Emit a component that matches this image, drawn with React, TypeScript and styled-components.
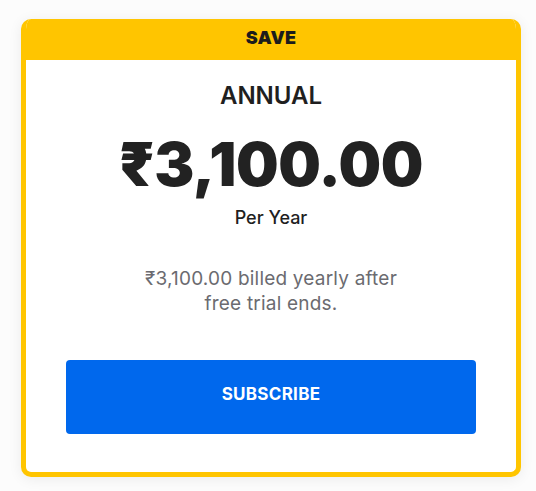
import React from "react";
import styled, { createGlobalStyle } from "styled-components";

const Global = createGlobalStyle`
  html, body { margin: 0; padding: 0; background: #ffffff; }
  body { font-family: Inter, "Noto Sans", "DejaVu Sans", sans-serif; color: #1f1f1f; }
`;

const Page = styled.div`
  padding: 19px 0 0 21px;
  width: 536px;
  height: 491px;
  box-sizing: border-box;
  background: #fcfcfc;
`;

const Card = styled.div`
  width: 500px;
  height: 458px;
  box-sizing: border-box;
  border: 5px solid #ffc500;
  border-top: 0;
  border-radius: 10px;
  background: #ffffff;
  box-shadow: 0 2px 14px rgba(0, 0, 0, 0.07);
  display: flex;
  flex-direction: column;
  align-items: center;
  overflow: hidden;
`;

const Banner = styled.div`
  align-self: stretch;
  height: 41px;
  background: #ffc500;
  display: flex;
  align-items: center;
  justify-content: center;
  padding-bottom: 4px;
  box-sizing: border-box;
  font-weight: 900;
  font-size: 18px;
  letter-spacing: 0.2px;
  color: #1c1c1c;
`;

const Plan = styled.div`
  margin-top: 21px;
  font-size: 24px;
  line-height: 30px;
  font-weight: 600;
  color: #1f1f1f;
`;

const Price = styled.div`
  margin-top: 18px;
  font-size: 60px;
  line-height: 70px;
  font-weight: 900;
  color: #222222;
  letter-spacing: -0.4px;
`;

const Period = styled.div`
  margin-top: 7px;
  font-size: 18px;
  line-height: 24px;
  font-weight: 500;
  color: #1f1f1f;
`;

const Note = styled.div`
  margin-top: 36px;
  width: 270px;
  text-align: center;
  font-size: 19px;
  line-height: 25px;
  font-weight: 400;
  letter-spacing: 0.2px;
  color: #6b6b70;
`;

const Subscribe = styled.button`
  margin-top: 44px;
  width: 410px;
  height: 74px;
  padding: 0 0 6px;
  border: 0;
  border-radius: 4px;
  background: #0068ed;
  color: #ffffff;
  font-family: inherit;
  font-size: 17px;
  font-weight: 700;
  letter-spacing: 0.3px;
  cursor: pointer;
`;

export default function App() {
  return (
    <>
      <Global />
      <Page>
        <Card>
          <Banner>SAVE</Banner>
          <Plan>ANNUAL</Plan>
          <Price>₹3,100.00</Price>
          <Period>Per Year</Period>
          <Note>₹3,100.00 billed yearly after free trial ends.</Note>
          <Subscribe>SUBSCRIBE</Subscribe>
        </Card>
      </Page>
    </>
  );
}
